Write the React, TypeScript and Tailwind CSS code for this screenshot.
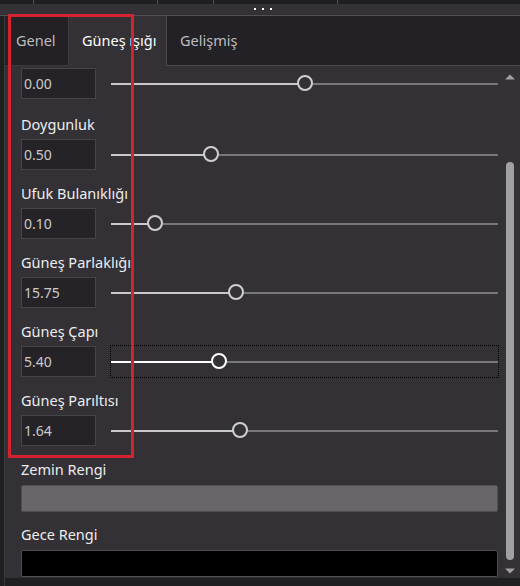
import React from "react";

type Row = { label: string | null; value: string; thumb: number; focused?: boolean };

// thumb = px from the start of the track to the thumb centre
const ROWS: Row[] = [
  { label: null, value: "0.00", thumb: 194 },
  { label: "Doygunluk", value: "0.50", thumb: 100 },
  { label: "Ufuk Bulanıklığı", value: "0.10", thumb: 44 },
  { label: "Güneş Parlaklığı", value: "15.75", thumb: 125 },
  { label: "Güneş Çapı", value: "5.40", thumb: 108, focused: true },
  { label: "Güneş Parıltısı", value: "1.64", thumb: 129 },
];

function Slider({ thumb, focused }: { thumb: number; focused?: boolean }) {
  return (
    <div
      className={`relative flex h-[31px] flex-1 items-center ${
        focused ? "outline outline-1 outline-dotted outline-black" : ""
      }`}
    >
      <div className="flex h-[2px] w-full">
        <div
          className={focused ? "bg-white" : "bg-[#c9c8ca]"}
          style={{ width: thumb }}
        />
        <div className="flex-1 bg-[#78777a]" />
      </div>
      <div
        className={`absolute top-[7px] h-[16px] w-[16px] rounded-full border-2 bg-[#333136] ${
          focused ? "border-white" : "border-[#cfcfcf]"
        }`}
        style={{ left: thumb - 8 }}
      />
    </div>
  );
}

function Field({ row }: { row: Row }) {
  return (
    <div className={`flex flex-col ${row.label ? "" : "mb-[2px]"}`}>
      {row.label && (
        <div className="mb-[5px] h-[20px] text-[14.5px] leading-[20px] text-[#ededed]">
          {row.label}
        </div>
      )}
      <div className="flex items-center gap-[15px]">
        <div className="flex h-[31px] w-[75px] items-center border border-[#454448] bg-[#252327] pl-[2px] text-[14px] text-[#cacaca]">
          {row.value}
        </div>
        <Slider thumb={row.thumb} focused={row.focused} />
      </div>
    </div>
  );
}

function ColorField({ label, color }: { label: string; color: string }) {
  return (
    <div className="flex flex-col">
      <div className="mb-[6px] h-[20px] text-[14.5px] leading-[20px] text-[#ededed]">
        {label}
      </div>
      <div className={`h-[27px] w-full rounded-[2px] border border-[#4e4d51] ${color}`} />
    </div>
  );
}

export default function App() {
  return (
    <div
      className="relative flex h-[586px] w-[520px] flex-col overflow-hidden bg-[#1f1e21]"
      style={{ fontFamily: '"Noto Sans", "Open Sans", sans-serif' }}
    >
      {/* top strip */}
      <div className="flex h-[4px] shrink-0">
        <div className="w-[34px] border-r border-[#4f4e52]" />
        <div className="w-[124px] border-r border-[#4f4e52]" />
        <div className="w-[56px] border-r border-[#4f4e52]" />
        <div className="w-[124px] border-r border-[#4f4e52]" />
      </div>
      <div className="flex h-[12px] shrink-0 items-center justify-center gap-[6px] border-b border-[#504f53] bg-[#343237] pl-[6px] pb-[1px]">
        <span className="h-[2px] w-[2px] bg-white" />
        <span className="h-[2px] w-[2px] bg-white" />
        <span className="h-[2px] w-[2px] bg-white" />
      </div>

      <div className="flex flex-1">
        <div className="w-[5px] border-r border-[#3a393c] bg-[#1f1e21]" />
        <div className="flex flex-1 flex-col">
          {/* tabs */}
          <div className="flex h-[50px] shrink-0 bg-[#232125] text-[14.5px]">
            <div className="flex w-[64px] items-center border-r border-b border-[#3b3a3e] pl-[11px] text-[#bdbcbf]">
              Genel
            </div>
            <div className="flex w-[98px] items-center border-r border-[#4a494d] bg-[#333136] pl-[13px] text-white">
              Güneş ışığı
            </div>
            <div className="flex flex-1 items-center border-b border-[#4a494d] pl-[13px] text-[#bdbcbf]">
              Gelişmiş
            </div>
          </div>

          {/* content */}
          <div className="flex flex-1 bg-[#333136]">
            <div className="flex flex-1 flex-col gap-[13px] pl-[16px] pt-[2px]">
              {ROWS.map((r, i) => (
                <Field key={i} row={r} />
              ))}
              <ColorField label="Zemin Rengi" color="bg-[#686669]" />
              <div className="-mt-[1px]">
                <ColorField label="Gece Rengi" color="bg-black" />
              </div>
            </div>

            {/* scrollbar */}
            <div className="ml-[8px] mr-[6px] flex w-[8px] flex-col items-center pt-[8px]">
              <svg width="10" height="6" viewBox="0 0 10 6" className="shrink-0">
                <path d="M0 5.5 L5 0.5 L10 5.5 Z" fill="#a09fa2" />
              </svg>
              <div className="mt-[82px] h-[398px] w-[8px] rounded-full bg-[#a09fa2]" />
              <svg width="10" height="6" viewBox="0 0 10 6" className="mt-[8px] shrink-0">
                <path d="M0 0.5 L10 0.5 L5 5.5 Z" fill="#a09fa2" />
              </svg>
            </div>
          </div>
          <div className="h-[8px] shrink-0 bg-[#1f1e21]" />
        </div>
      </div>

      {/* annotation box */}
      <div className="absolute left-[8px] top-[14px] h-[444px] w-[126px] border-[3px] border-[#d6212f]" />
    </div>
  );
}
